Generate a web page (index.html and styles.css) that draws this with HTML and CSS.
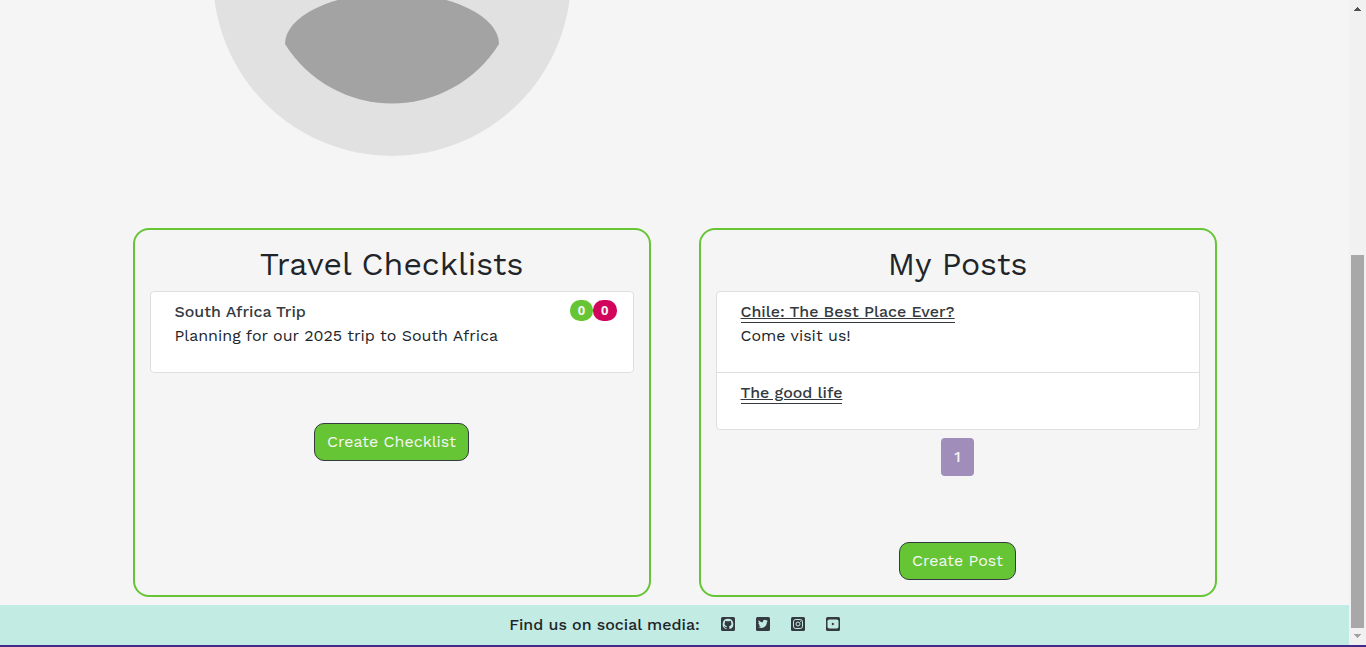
FILE: index.html
```html
<!DOCTYPE html>
<html lang="en">
<head>
<meta charset="utf-8">
<meta name="viewport" content="width=device-width, initial-scale=1">
<title>My Profile</title>
<link rel="stylesheet" href="styles.css">
</head>
<body>
<div class="window">
  <div class="page">
    <main class="container">
      <div class="avatar-column">
        <svg class="avatar" viewBox="0 0 358 156" role="img" aria-label="Profile picture">
          <circle cx="179" cy="-23" r="179" fill="#e1e1e1"/>
          <path d="M72 44A107 51 0 0 1 286 44A126 126 0 0 1 72 44Z" fill="#a3a3a3"/>
        </svg>
      </div>
      <div class="spacer"></div>

      <section class="panel">
        <h2 class="panel-title">Travel Checklists</h2>
        <ul class="list">
          <li class="list-item">
            <div class="item-text">
              <h3 class="item-title">South Africa Trip</h3>
              <p class="item-copy">Planning for our 2025 trip to South Africa</p>
            </div>
            <div class="badges">
              <span class="badge badge-done">0</span>
              <span class="badge badge-open">0</span>
            </div>
          </li>
        </ul>
        <button type="button" class="btn btn-checklist">Create Checklist</button>
      </section>

      <section class="panel">
        <h2 class="panel-title">My Posts</h2>
        <ul class="list">
          <li class="list-item">
            <div class="item-text">
              <a class="item-title item-link" href="#">Chile: The Best Place Ever?</a>
              <p class="item-copy">Come visit us!</p>
            </div>
          </li>
          <li class="list-item">
            <div class="item-text">
              <a class="item-title item-link" href="#">The good life</a>
            </div>
          </li>
        </ul>
        <a class="page-link" href="#" aria-current="page">1</a>
        <button type="button" class="btn btn-post">Create Post</button>
      </section>
    </main>

    <footer class="footer">
      <span>Find us on social media:</span>
      <nav class="social">
        <a href="#" aria-label="GitHub"><svg viewBox="0 0 14 14"><path fill-rule="evenodd" d="M1.500 0H12.500A1.500 1.500 0 0 1 14 1.500V12.500A1.500 1.500 0 0 1 12.500 14H1.500A1.500 1.500 0 0 1 0 12.500V1.500A1.500 1.500 0 0 1 1.500 0ZM7 1.800A5.300 5.300 0 0 0 5.200 12.100Q5.600 12.200 5.600 11.800V10.900C4.100 11.200 3.800 10.200 3.500 9.900L2.900 9.300C3.700 9 4.100 9.900 4.500 10.100Q5.100 10.300 5.600 10Q5.700 9.400 6 9.200C4.200 9 3.500 8.200 3.500 6.600Q3.500 5.800 4.100 5.200Q3.900 4.400 4.200 3.700Q4.800 3.600 5.700 4.300Q7 4 8.300 4.300Q9.200 3.600 9.800 3.700Q10.100 4.400 9.900 5.200Q10.500 5.800 10.500 6.600C10.500 8.200 9.800 9 8 9.200Q8.400 9.500 8.400 10.200V11.800Q8.400 12.200 8.800 12.100A5.300 5.300 0 0 0 7 1.800Z" fill="#343a40"/></svg></a>
        <a href="#" aria-label="Twitter"><svg viewBox="0 0 14 14"><rect width="14" height="14" rx="1.5" fill="#343a40"/><path d="M2.600 3.300Q4.300 5.300 6.900 5.400C6.500 3 9 2.100 10.300 3.500L11.600 3L10.800 4.200L12 3.900L10.900 5C11 9.600 6.200 12.300 2 10.100Q3.700 10.200 4.800 9.300Q3.500 9.200 3 7.900H3.800Q2.400 7.400 2.300 5.900L3.200 6.100Q2 5 2.600 3.300Z" fill="#c2ebe4"/></svg></a>
        <a href="#" aria-label="Instagram"><svg viewBox="0 0 14 14"><rect width="14" height="14" rx="1.5" fill="#343a40"/><rect x="2.500" y="2.500" width="9" height="9" rx="2.300" fill="none" stroke="#c2ebe4"/><circle cx="7" cy="7" r="2" fill="none" stroke="#c2ebe4"/><circle cx="9.700" cy="4.300" r=".6" fill="#c2ebe4"/></svg></a>
        <a href="#" aria-label="YouTube"><svg viewBox="0 0 14 14"><rect width="14" height="14" rx="1.500" fill="#343a40"/><rect x="1.500" y="2.500" width="11" height="9" rx="1.800" fill="#c2ebe4"/><path d="M5.900 5.400L8.700 7L5.900 8.600Z" fill="#343a40"/></svg></a>
      </nav>
    </footer>
  </div>
  <div class="scrollbar" aria-hidden="true">
    <svg class="arrow" viewBox="0 0 7 4"><path d="M3 0H4V1H5V2H6V3H7V4H0V3H1V2H2V1H3Z" fill="#505050"/></svg>
    <div class="track"><div class="thumb"></div></div>
    <svg class="arrow" viewBox="0 0 7 4"><path d="M0 0H7V1H6V2H5V3H4V4H3V3H2V2H1V1H0Z" fill="#a3a3a3"/></svg>
  </div>
</div>
<div class="baseline"></div>
</body>
</html>
```

FILE: styles.css
```css
* {
  box-sizing: border-box;
}

body {
  margin: 0;
  background: #f5f5f5;
  color: #212529;
  font-family: "Work Sans", Inter, sans-serif;
  font-size: 16px;
  font-weight: 400;
  line-height: 24px;
}

.window {
  display: flex;
}

.page {
  flex: 1;
  min-width: 0;
}

.container {
  display: grid;
  grid-template-columns: 1fr 1fr;
  column-gap: 48px;
  max-width: 1132px;
  margin: 0 auto;
  padding: 0 24px 8px;
}

.avatar-column {
  padding-bottom: 72px;
}

.avatar {
  display: block;
  width: 358px;
  max-width: 100%;
  margin: 0 auto;
}

.panel {
  display: flex;
  flex-direction: column;
  align-items: center;
  padding: 15px;
  border: 2px solid #66c534;
  border-radius: 16px;
}

.panel-title {
  margin: 0 0 8px;
  font-size: 32px;
  font-weight: 400;
  line-height: 38px;
}

.list {
  align-self: stretch;
  margin: 0;
  padding: 0;
  list-style: none;
  background: #fff;
  border: 1px solid #dfdfdf;
  border-radius: 4px;
}

.list-item {
  display: flex;
  justify-content: space-between;
  padding: 8px 16px 24px 24px;
}

.list-item + .list-item {
  border-top: 1px solid #dfdfdf;
}

.item-title {
  margin: 0;
  color: #343a40;
  font-size: 16px;
  font-weight: 500;
  line-height: 24px;
}

.item-link {
  padding-bottom: 1px;
  border-bottom: 1px solid #343a40;
  text-decoration: underline;
  text-underline-offset: 1px;
}

.item-copy {
  margin: 0;
}

.badges {
  display: flex;
}

.badge {
  height: 21px;
  padding: 0 8px;
  border-radius: 10px;
  color: #f5f5f5;
  font-family: "Open Sans", sans-serif;
  font-size: 13px;
  font-weight: 700;
  line-height: 21px;
}

.badge-done {
  background: #66c534;
}

.badge-open {
  background: #d1055c;
}

.btn {
  padding: 6px 12px;
  background: #66c534;
  border: 1px solid #343a40;
  border-radius: 10px;
  color: #f5f5f5;
  font: inherit;
}

.btn-checklist {
  margin-top: 50px;
}

.btn-post {
  margin-top: 66px;
}

.page-link {
  margin-top: 8px;
  padding: 7px 13px;
  background: #a18dba;
  border-radius: 4px;
  color: #f5f5f5;
  font-weight: 500;
  text-decoration: none;
}

.footer {
  display: flex;
  justify-content: center;
  gap: 21px;
  padding: 8px;
  background: #c2ebe4;
  font-weight: 500;
}

.social {
  display: flex;
  gap: 21px;
  padding-top: 4px;
}

.social svg {
  display: block;
  width: 14px;
  height: 14px;
}

.scrollbar {
  display: flex;
  flex-direction: column;
  align-items: center;
  width: 17px;
  padding: 7px 0;
  background: #f1f1f1;
}

.arrow {
  width: 7px;
  height: 4px;
}

.track {
  display: flex;
  flex: 1;
  flex-direction: column;
  justify-content: flex-end;
  padding-bottom: 6px;
}

.thumb {
  width: 13px;
  height: 60.5%;
  background: #a8a8a8;
}

.baseline {
  height: 2px;
  background: #42298c;
}
```
